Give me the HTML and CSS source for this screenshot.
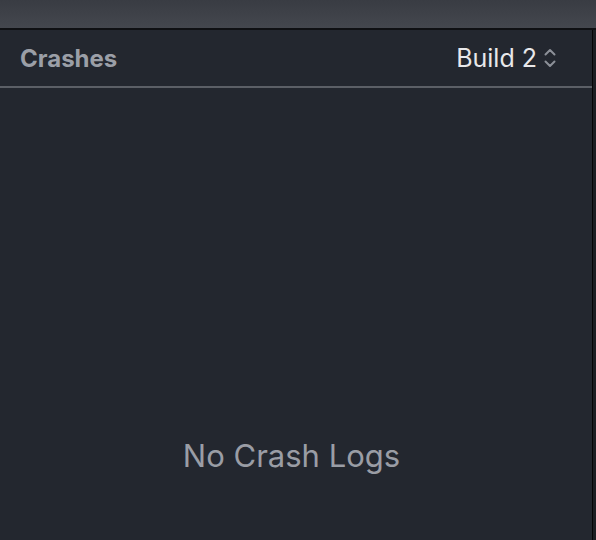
FILE: index.html
```html
<!DOCTYPE html>
<html lang="en">
<head>
  <meta charset="UTF-8">
  <title>Crashes</title>
  <link rel="stylesheet" href="styles.css">
</head>
<body>

  <div class="titlebar"></div>

  <div class="main">
    <div class="panel">
      <div class="panel-header">
        <h2 class="panel-title">Crashes</h2>
        <div class="build-picker">
          <span>Build 2</span>
          <svg class="updown" width="16" height="24" viewBox="0 0 16 24">
            <path d="M3.5 8.5 L8 4 L12.5 8.5" fill="none" stroke="#8c9098" stroke-width="2" stroke-linecap="round" stroke-linejoin="round"/>
            <path d="M3.5 15.5 L8 20 L12.5 15.5" fill="none" stroke="#8c9098" stroke-width="2" stroke-linecap="round" stroke-linejoin="round"/>
          </svg>
        </div>
      </div>
      <div class="panel-body">
        <p class="empty">No Crash Logs</p>
      </div>
    </div>
    <div class="edge"></div>
  </div>

</body>
</html>
```

FILE: styles.css
```css
html, body {
  height: 100%;
}

body {
  margin: 0;
  font-family: Inter, "Liberation Sans", Arial, sans-serif;
  background-color: #23272f;
  display: flex;
  flex-direction: column;
  overflow: hidden;
}

.titlebar {
  height: 28px;
  background: linear-gradient(#393c43, #44474e);
  border-bottom: 2px solid #0f1013;
  flex-shrink: 0;
}

.main {
  flex: 1;
  display: flex;
}

.panel {
  flex: 1;
  display: flex;
  flex-direction: column;
}

.edge {
  width: 3px;
  border-left: 1px solid #050506;
  background-color: #1c1e23;
}

.panel-header {
  height: 56px;
  padding: 0 34px 0 20px;
  display: flex;
  align-items: center;
  justify-content: space-between;
  border-bottom: 2px solid #5b5f66;
}

.panel-title {
  margin: 0;
  font-size: 24px;
  font-weight: bold;
  color: #9b9fa7;
}

.build-picker {
  display: flex;
  align-items: center;
  gap: 5px;
  font-size: 25px;
  color: #e8e8ea;
}

.updown {
  display: block;
}

.panel-body {
  flex: 1;
  padding: 349px 9px 0 0;
  text-align: center;
}

.empty {
  margin: 0;
  font-size: 31px;
  line-height: 38px;
  color: #9a9da5;
}
```
